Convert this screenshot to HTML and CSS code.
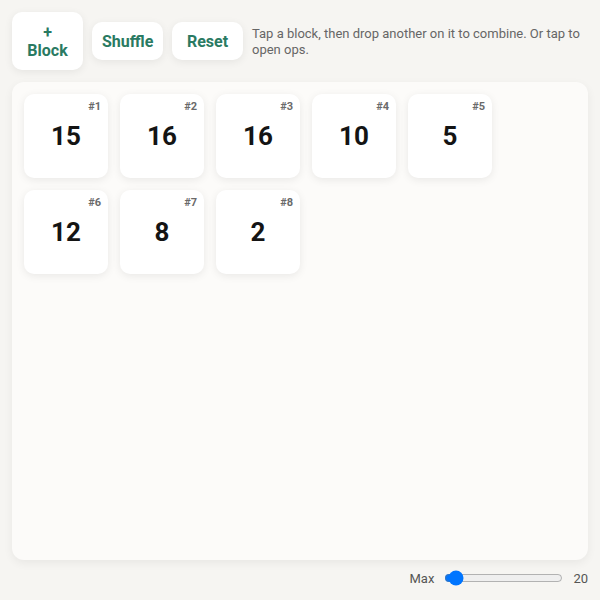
FILE: index.html
```html
<!DOCTYPE html>
<html>
<head>
<meta charset="utf-8">
<link rel="stylesheet" href="styles.css">
</head>
<body>
<div class="app">
  <div class="toolbar">
    <button class="btn btn-add">+ Block</button>
    <button class="btn">Shuffle</button>
    <button class="btn">Reset</button>
    <p class="hint">Tap a block, then drop another on it to combine. Or tap to open ops.</p>
  </div>
  <div class="board">
    <div class="tile"><span class="tag">#1</span><span class="num">15</span></div>
    <div class="tile"><span class="tag">#2</span><span class="num">16</span></div>
    <div class="tile"><span class="tag">#3</span><span class="num">16</span></div>
    <div class="tile"><span class="tag">#4</span><span class="num">10</span></div>
    <div class="tile"><span class="tag">#5</span><span class="num">5</span></div>
    <div class="tile"><span class="tag">#6</span><span class="num">12</span></div>
    <div class="tile"><span class="tag">#7</span><span class="num">8</span></div>
    <div class="tile"><span class="tag">#8</span><span class="num">2</span></div>
  </div>
  <div class="footer">
    <span class="lbl">Max</span>
    <input class="range" type="range" min="16" max="116" value="20">
    <span class="val">20</span>
  </div>
</div>
</body>
</html>
```
FILE: styles.css
```css
* { box-sizing: border-box; }
html, body { margin: 0; padding: 0; }
body {
  background: #f6f5f2;
  font-family: Roboto, "Liberation Sans", sans-serif;
  width: 600px;
  height: 600px;
  overflow: hidden;
}
.app {
  height: 600px;
  padding: 12px;
  display: flex;
  flex-direction: column;
}
.toolbar {
  display: flex;
  align-items: center;
  gap: 9px;
}
.btn {
  width: 71px;
  padding: 11px 10px 9px;
  border: none;
  border-radius: 10px;
  background: #ffffff;
  color: #2a7a62;
  font-family: Roboto, "Liberation Sans", sans-serif;
  font-weight: 700;
  font-size: 16px;
  line-height: 18px;
  box-shadow: 0 2px 8px rgba(0,0,0,0.07);
  flex: none;
  white-space: normal;
}
.btn-add { padding: 12px 10px 10px; }
.hint {
  margin: 0;
  padding-top: 2px;
  font-size: 13px;
  line-height: 16px;
  color: #666;
  flex: 1;
}
.board {
  margin-top: 12px;
  flex: 1;
  background: #fcfbf9;
  border-radius: 12px;
  box-shadow: 0 3px 10px rgba(0,0,0,0.06);
  padding: 12px;
  display: flex;
  flex-wrap: wrap;
  align-content: flex-start;
  gap: 12px;
}
.tile {
  position: relative;
  width: 84px;
  height: 84px;
  background: #fff;
  border-radius: 10px;
  box-shadow: 0 2px 8px rgba(0,0,0,0.08);
  display: flex;
  align-items: center;
  justify-content: center;
}
.num {
  font-size: 26px;
  font-weight: 700;
  color: #141414;
}
.tag {
  position: absolute;
  top: 6px;
  right: 7px;
  font-size: 11px;
  font-weight: 700;
  color: #6a6a6a;
}
.footer {
  margin-top: 8px;
  height: 20px;
  display: flex;
  align-items: center;
  justify-content: flex-end;
  gap: 10px;
  font-size: 13px;
  color: #555;
}
.range {
  width: 119px;
  margin: 0;
}
```
